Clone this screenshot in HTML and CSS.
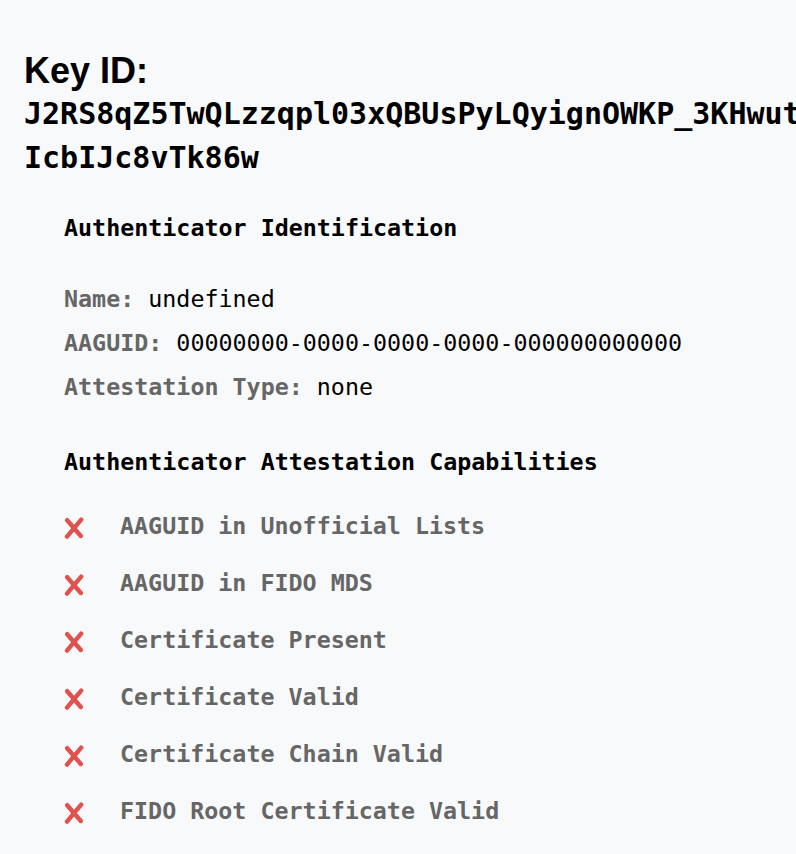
FILE: index.html
```html
<!DOCTYPE html>
<html lang="en">
<head>
<meta charset="utf-8">
<title>Key ID</title>
<link rel="stylesheet" href="styles.css">
</head>
<body>
<main class="page">
  <h2 class="key-title">Key ID:<span class="key-id">J2RS8qZ5TwQLzzqpl03xQBUsPyLQyignOWKP_3KHwutIcbIJc8vTk86w</span></h2>

  <section class="section">
    <h3 class="section-title">Authenticator Identification</h3>
    <ul class="info-list">
      <li class="info-row"><span class="info-label">Name:</span> undefined</li>
      <li class="info-row"><span class="info-label">AAGUID:</span> 00000000-0000-0000-0000-000000000000</li>
      <li class="info-row"><span class="info-label">Attestation Type:</span> none</li>
    </ul>
  </section>

  <section class="section section-caps">
    <h3 class="section-title">Authenticator Attestation Capabilities</h3>
    <ul class="cap-list">
      <li class="cap-row"><svg class="cap-icon" viewBox="0 0 20 22" width="20" height="22"><path d="M3.2 3.2 L16.8 19" /><path d="M17.2 2.6 Q10.5 10.5 3 19.6" /></svg><span class="cap-text">AAGUID in Unofficial Lists</span></li>
      <li class="cap-row"><svg class="cap-icon" viewBox="0 0 20 22" width="20" height="22"><path d="M3.2 3.2 L16.8 19" /><path d="M17.2 2.6 Q10.5 10.5 3 19.6" /></svg><span class="cap-text">AAGUID in FIDO MDS</span></li>
      <li class="cap-row"><svg class="cap-icon" viewBox="0 0 20 22" width="20" height="22"><path d="M3.2 3.2 L16.8 19" /><path d="M17.2 2.6 Q10.5 10.5 3 19.6" /></svg><span class="cap-text">Certificate Present</span></li>
      <li class="cap-row"><svg class="cap-icon" viewBox="0 0 20 22" width="20" height="22"><path d="M3.2 3.2 L16.8 19" /><path d="M17.2 2.6 Q10.5 10.5 3 19.6" /></svg><span class="cap-text">Certificate Valid</span></li>
      <li class="cap-row"><svg class="cap-icon" viewBox="0 0 20 22" width="20" height="22"><path d="M3.2 3.2 L16.8 19" /><path d="M17.2 2.6 Q10.5 10.5 3 19.6" /></svg><span class="cap-text">Certificate Chain Valid</span></li>
      <li class="cap-row"><svg class="cap-icon" viewBox="0 0 20 22" width="20" height="22"><path d="M3.2 3.2 L16.8 19" /><path d="M17.2 2.6 Q10.5 10.5 3 19.6" /></svg><span class="cap-text">FIDO Root Certificate Valid</span></li>
    </ul>
  </section>
</main>
</body>
</html>
```

FILE: styles.css
```css
html, body {
  margin: 0;
  padding: 0;
  background: #f8f9fb;
  overflow-x: hidden;
}

.page {
  padding: 50px 0 0 24px;
  color: #000;
  font-family: "DejaVu Sans Mono", "Liberation Mono", monospace;
}

.key-title {
  margin: 0;
  font-family: "Liberation Sans", Arial, sans-serif;
  font-weight: bold;
  font-size: 36px;
  line-height: 42px;
}

.key-id {
  display: block;
  width: 43ch;
  font-family: "DejaVu Sans Mono", "Liberation Mono", monospace;
  font-weight: bold;
  font-size: 30px;
  line-height: 44px;
  word-break: break-all;
}

.section {
  margin: 34px 0 0 40px;
}

.section-caps {
  margin-top: 39px;
}

.section-title {
  margin: 0;
  font-weight: bold;
  font-size: 23.33px;
  line-height: 28px;
}

.info-list,
.cap-list {
  list-style: none;
  margin: 35px 0 0;
  padding: 0;
}

.cap-list {
  margin-top: 22px;
}

.info-row {
  font-size: 23.33px;
  line-height: 44px;
  white-space: nowrap;
}

.info-label {
  font-weight: bold;
  color: #666;
}

.cap-row {
  display: flex;
  align-items: flex-start;
  height: 57px;
  font-size: 23.33px;
  line-height: 57px;
}

.cap-icon {
  flex: none;
  margin-top: 19px;
  fill: none;
  stroke: #e0524d;
  stroke-width: 4.4;
  stroke-linecap: round;
}

.cap-text {
  margin-left: 36px;
  font-weight: bold;
  color: #666;
  white-space: nowrap;
}
```
